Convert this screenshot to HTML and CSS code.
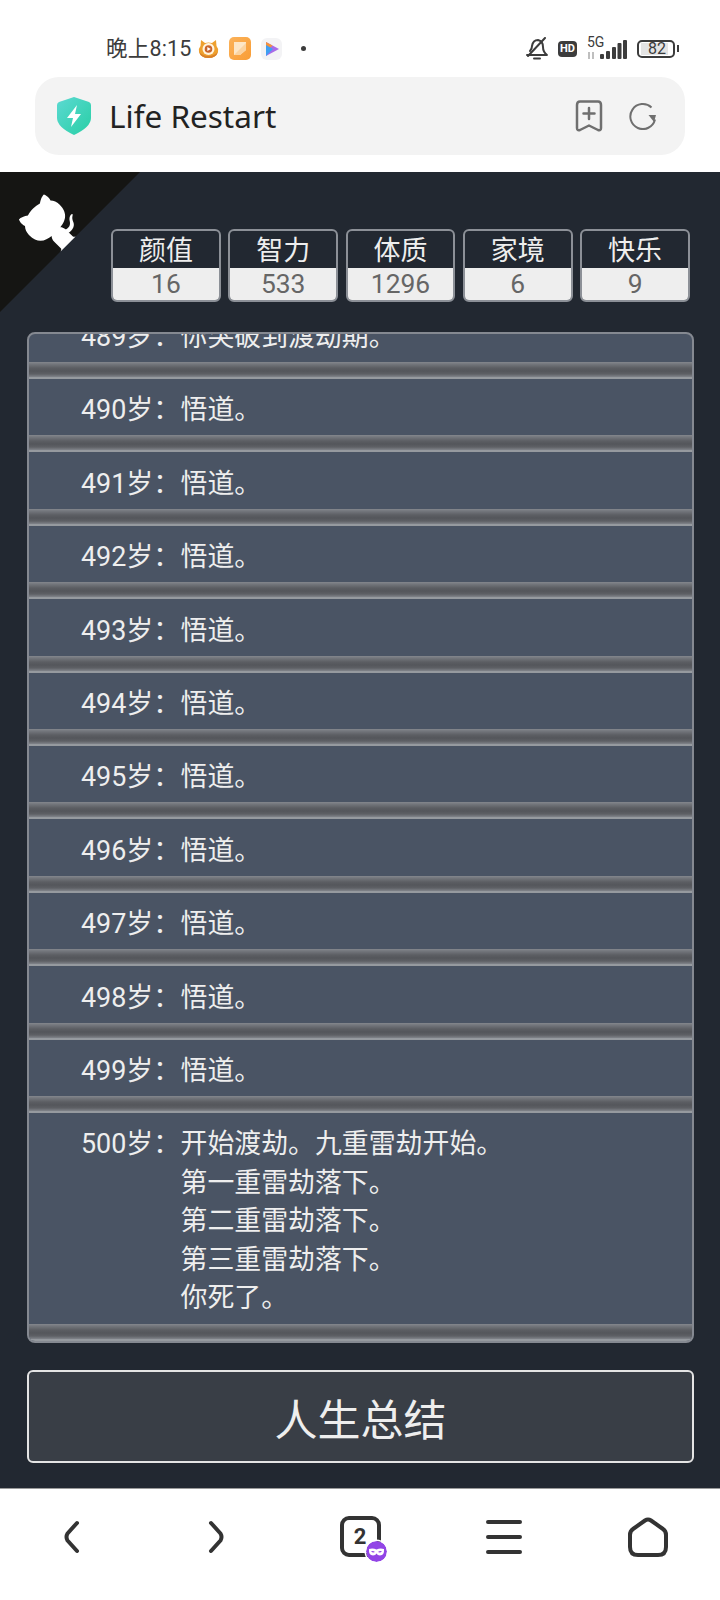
FILE: index.html
```html
<!DOCTYPE html>
<html lang="zh-CN">
<head>
    <meta charset="UTF-8">
    <meta name="viewport" content="width=device-width, initial-scale=1.0">
    <title>Life Restart</title>
    <link rel="stylesheet" href="styles.css">
</head>
<body>
    <div class="page">
        <header class="browser-top">
            <div class="statusbar">
                <div class="status-left">
                    <span class="clock">晚上8:15</span>
                    <svg class="notif" width="21" height="20" viewBox="0 0 21 20">
                        <path d="M3 1 L7 4 Q10.500 3 14 4 L18 1 L18.500 7 Q21 10 20 13 Q18 19 10.500 19 Q3 19 1 13 Q0 10 2.500 7 Z" fill="#eea02e"/>
                        <path d="M1 13 Q5 17 10.500 17 Q16 17 20 13 Q18 19 10.500 19 Q3 19 1 13 Z" fill="#d9802a"/>
                        <circle cx="10.500" cy="10" r="6" fill="#fff4df"/>
                        <circle cx="10.500" cy="10" r="3.800" fill="#c8642b"/>
                        <path d="M9.300 8 L12.800 10 L9.300 12 Z" fill="#fff"/>
                    </svg>
                    <svg class="notif" width="22" height="23" viewBox="0 0 22 23">
                        <defs>
                            <linearGradient id="noteFill" x1="0" y1="0" x2="1" y2="1">
                                <stop offset="0" stop-color="#fbb25a"/>
                                <stop offset="1" stop-color="#f99d35"/>
                            </linearGradient>
                        </defs>
                        <rect width="22" height="23" rx="5" fill="url(#noteFill)"/>
                        <path d="M5 5 H17 V13 L11 18 H5 Z" fill="#fde6c6"/>
                        <path d="M5 18 L17 6 V13 L11 18 Z" fill="#fbd3a0"/>
                    </svg>
                    <svg class="notif" width="21" height="22" viewBox="0 0 21 22">
                        <rect width="21" height="22" rx="6" fill="#f3f3f5"/>
                        <path d="M5 4 L18 11 L5 18 Z" fill="#a86be8"/>
                        <path d="M5 4 L11.500 7.500 L8 11 L5 11 Z" fill="#f5923c"/>
                        <path d="M5 7 L12 11 L5 18 Z" fill="#3f9ff2"/>
                    </svg>
                    <span class="status-dot"></span>
                </div>
                <div class="status-right">
                    <svg width="24" height="24" viewBox="0 0 24 24" fill="none" stroke="#3c3c3c" stroke-width="2" stroke-linecap="round" stroke-linejoin="round">
                        <path d="M5 14 Q7 12 7 9 Q8 3 13 3 Q18 4 18 10 Q18 15 22 18 H2"/>
                        <path d="M9 21.500 H15"/>
                        <path d="M3 19 L20 1"/>
                    </svg>
                    <span class="hd">HD</span>
                    <div class="signal">
                        <span class="five-g">5G</span>
                        <svg width="40" height="20" viewBox="0 0 40 20">
                            <path d="M2 13 V20 M6 13 V20" stroke="#aaa" stroke-width="1.500" fill="none"/>
                            <rect x="13" y="15" width="4" height="5" rx="1" fill="#3c3c3c"/>
                            <rect x="19" y="12" width="4" height="8" rx="1" fill="#3c3c3c"/>
                            <rect x="25" y="8" width="4" height="12" rx="1" fill="#3c3c3c"/>
                            <rect x="30.500" y="4" width="4" height="16" rx="1" fill="#3c3c3c"/>
                            <rect x="36" y="1" width="4" height="19" rx="1" fill="#3c3c3c"/>
                        </svg>
                    </div>
                    <div class="battery">
                        <div class="battery-body"><span class="battery-level">82</span></div>
                        <span class="battery-cap"></span>
                    </div>
                </div>
            </div>
            <div class="urlbar">
                <svg class="shield" width="34" height="38" viewBox="0 0 34 38">
                    <defs>
                        <linearGradient id="shieldFill" x1="0" y1="0" x2="1" y2="1">
                            <stop offset="0" stop-color="#5cd9d2"/>
                            <stop offset="1" stop-color="#28cfa5"/>
                        </linearGradient>
                    </defs>
                    <path d="M17 0 L32 5 Q34 6 34 8 V21 Q34 30 17 38 Q0 30 0 21 V8 Q0 6 2 5 Z" fill="url(#shieldFill)"/>
                    <path d="M20 8 L10 21 H16 L14 30 L24 17 H18 Z" fill="#fff"/>
                </svg>
                <span class="site-title">Life Restart</span>
                <svg class="bookmark" width="28" height="32" viewBox="0 0 28 32" fill="none" stroke="#6f6f6f" stroke-width="2.500" stroke-linejoin="round" stroke-linecap="round">
                    <path d="M2 5 Q2 1.500 5 1.500 H23 Q26 1.500 26 5 V28 Q26 31 23 30 L14 25.500 L5 30 Q2 31 2 28 Z"/>
                    <path d="M14 8 V19 M8.500 13.500 H19.500"/>
                </svg>
                <svg class="reload" width="28" height="28" viewBox="0 0 28 28" fill="none">
                    <path d="M22.500 5.500 A12.500 12.500 0 1 0 26 17.500" stroke="#6f6f6f" stroke-width="2"/>
                    <path d="M19.500 13 H27 L25 20 Z" fill="#6f6f6f"/>
                </svg>
            </div>
        </header>

        <main class="game">
            <svg class="octocat" width="140" height="140" viewBox="0 0 250 250">
                <g transform="translate(250 0) scale(-1 1)">
                    <path d="M0,0 L115,115 L130,115 L142,142 L250,250 L250,0 Z" fill="#151513"/>
                    <path d="M128.3,109.0 C113.8,99.7 119.0,89.6 119.0,89.6 C122.0,82.7 120.5,78.6 120.5,78.6 C119.2,72.0 123.4,76.3 123.4,76.3 C127.3,80.9 125.5,87.3 125.5,87.3 C122.9,97.6 130.6,101.9 134.4,103.2" fill="#fff"/>
                    <path d="M115.0,115.0 C114.9,115.1 118.7,116.5 119.8,115.4 L133.7,101.6 C136.9,99.2 139.9,98.4 142.2,98.6 C133.8,88.0 127.5,74.4 143.8,58.0 C148.5,53.4 154.0,51.2 159.7,51.0 C160.3,49.4 163.2,43.6 171.4,40.1 C171.4,40.1 176.1,42.5 178.8,56.2 C183.1,58.6 187.2,61.8 190.9,65.4 C194.5,69.0 197.7,73.2 200.1,77.6 C213.8,80.2 216.3,84.9 216.3,84.9 C212.7,93.1 206.9,96.0 205.4,96.6 C205.1,102.4 203.0,107.8 198.3,112.5 C181.9,128.9 168.3,122.5 157.7,114.1 C157.9,116.9 156.7,120.9 152.7,124.9 L141.0,136.5 C139.8,137.7 141.6,141.9 141.8,141.8 Z" fill="#fff"/>
                </g>
            </svg>

            <div class="stats">
                <div class="stat"><div class="stat-name">颜值</div><div class="stat-value">16</div></div>
                <div class="stat"><div class="stat-name">智力</div><div class="stat-value">533</div></div>
                <div class="stat"><div class="stat-name">体质</div><div class="stat-value">1296</div></div>
                <div class="stat"><div class="stat-name">家境</div><div class="stat-value">6</div></div>
                <div class="stat"><div class="stat-name">快乐</div><div class="stat-value">9</div></div>
            </div>

            <div class="trajectory">
                <ul class="trajectory-list">
                    <li class="year"><span class="age">489岁：</span><span class="event">你突破到渡劫期。</span></li>
                    <li class="year"><span class="age">490岁：</span><span class="event">悟道。</span></li>
                    <li class="year"><span class="age">491岁：</span><span class="event">悟道。</span></li>
                    <li class="year"><span class="age">492岁：</span><span class="event">悟道。</span></li>
                    <li class="year"><span class="age">493岁：</span><span class="event">悟道。</span></li>
                    <li class="year"><span class="age">494岁：</span><span class="event">悟道。</span></li>
                    <li class="year"><span class="age">495岁：</span><span class="event">悟道。</span></li>
                    <li class="year"><span class="age">496岁：</span><span class="event">悟道。</span></li>
                    <li class="year"><span class="age">497岁：</span><span class="event">悟道。</span></li>
                    <li class="year"><span class="age">498岁：</span><span class="event">悟道。</span></li>
                    <li class="year"><span class="age">499岁：</span><span class="event">悟道。</span></li>
                    <li class="year"><span class="age">500岁：</span><span class="event">开始渡劫。九重雷劫开始。<br>第一重雷劫落下。<br>第二重雷劫落下。<br>第三重雷劫落下。<br>你死了。</span></li>
                </ul>
            </div>

            <button class="summary" type="button">人生总结</button>
        </main>

        <nav class="browser-nav">
            <svg width="20" height="34" viewBox="0 0 20 34" fill="none" stroke="#333" stroke-width="4" stroke-linecap="round" stroke-linejoin="round">
                <path d="M15 3 L5.500 13.500 Q3.500 17 5.500 20.500 L15 31"/>
            </svg>
            <svg width="20" height="34" viewBox="0 0 20 34" fill="none" stroke="#333" stroke-width="4" stroke-linecap="round" stroke-linejoin="round">
                <path d="M5 3 L14.500 13.500 Q16.500 17 14.500 20.500 L5 31"/>
            </svg>
            <div class="tabs">
                <span class="tab-count">2</span>
                <svg class="incognito" width="21" height="21" viewBox="0 0 21 21">
                    <circle cx="10.500" cy="10.500" r="10.500" fill="#9245e6"/>
                    <path d="M3 8 Q7 7 10.500 8.500 Q14 7 18 8 Q18.500 14.500 14 14.500 Q11.500 14.500 10.500 12.500 Q9.500 14.500 7 14.500 Q2.500 14.500 3 8 Z" fill="#fff"/>
                    <path d="M5 10.500 Q7 9.500 9 11 Q7 12 5 10.500 Z M16 10.500 Q14 9.500 12 11 Q14 12 16 10.500 Z" fill="#9245e6"/>
                </svg>
            </div>
            <svg width="36" height="34" viewBox="0 0 36 34" fill="none" stroke="#333" stroke-width="4" stroke-linecap="round">
                <path d="M2 2 H34 M2 17 H34 M2 32 H34"/>
            </svg>
            <svg width="40" height="40" viewBox="0 0 40 40" fill="none" stroke="#333" stroke-width="4" stroke-linejoin="round">
                <path d="M17 3.500 Q20 1.500 23 3.500 L35 12 Q38 14 38 18 V30 Q38 38 30 38 H10 Q2 38 2 30 V18 Q2 14 5 12 Z"/>
            </svg>
        </nav>
    </div>
</body>
</html>
```

FILE: styles.css
```css
* {
    box-sizing: border-box;
}
body {
    margin: 0;
    font-family: Roboto, "Noto Sans CJK SC", sans-serif;
}
.page {
    display: flex;
    flex-direction: column;
    width: 720px;
    height: 1600px;
    overflow: hidden;
}

/* browser chrome, top */
.browser-top {
    height: 172px;
    flex: none;
    background-color: #fff;
}
.statusbar {
    display: flex;
    justify-content: space-between;
    align-items: center;
    height: 77px;
    padding: 20px 41px 0 106px;
}
.status-left, .status-right {
    display: flex;
    align-items: center;
}
.clock {
    margin-right: 6px;
    margin-bottom: 4px;
    color: #3c3c3c;
    font-size: 21.500px;
    letter-spacing: 0.200px;
}
.notif {
    margin-right: 10px;
}
.status-dot {
    width: 5px;
    height: 5px;
    margin-left: 9px;
    border-radius: 50%;
    background-color: #3c3c3c;
}
.status-right svg {
    display: block;
}
.hd {
    width: 19px;
    height: 16px;
    margin-left: 9px;
    border-radius: 4px;
    background-color: #3c3c3c;
    color: #fff;
    font-size: 11px;
    font-weight: 700;
    line-height: 16px;
    text-align: center;
}
.signal {
    position: relative;
    width: 40px;
    height: 20px;
    margin-left: 10px;
}
.five-g {
    position: absolute;
    top: -4px;
    left: 0;
    color: #3c3c3c;
    font-size: 14px;
    line-height: 14px;
}
.battery {
    display: flex;
    align-items: center;
    margin-left: 10px;
}
.battery-body {
    width: 38px;
    height: 18px;
    padding: 1px 0 1px 2px;
    border: 2px solid #3c3c3c;
    border-radius: 5px;
}
.battery-level {
    display: block;
    height: 12px;
    background-image: linear-gradient(90deg, #e4e4e4 84%, transparent 84%);
    color: #3c3c3c;
    font-size: 16px;
    line-height: 12px;
    text-align: center;
}
.battery-cap {
    width: 2px;
    height: 7px;
    margin-left: 2px;
    background-color: #3c3c3c;
}
.urlbar {
    display: flex;
    align-items: center;
    width: 650px;
    height: 78px;
    margin-left: 35px;
    padding-left: 22px;
    border-radius: 24px;
    background-color: #f3f3f3;
}
.site-title {
    flex: 1;
    margin-left: 18px;
    margin-bottom: 2px;
    color: #222;
    font-family: "Noto Sans", sans-serif;
    font-size: 31.500px;
}
.reload {
    margin: 0 28px 0 26px;
}

/* game */
.game {
    position: relative;
    flex: 1;
    padding: 57px 26px 0 27px;
    background-color: #222831;
}
.octocat {
    position: absolute;
    top: 0;
    left: 0;
}
.stats {
    display: flex;
    gap: 7.500px;
    padding: 0 4px 0 84px;
}
.stat {
    width: 110px;
    height: 73px;
    overflow: hidden;
    border: 2px solid #8c9097;
    border-radius: 6px;
    text-align: center;
}
.stat-name {
    height: 37px;
    padding-top: 3px;
    color: #eee;
    font-size: 27px;
    line-height: 34px;
}
.stat-value {
    height: 32px;
    padding-top: 1px;
    background-color: #eee;
    color: #666;
    font-size: 26.400px;
    line-height: 31px;
}
.trajectory {
    height: 1011px;
    margin-top: 30px;
    overflow: hidden;
    border: 2px solid #858991;
    border-radius: 8px;
    background-color: #4a5464;
}
.trajectory-list {
    margin: -28.500px 0 0;
    padding: 0;
    list-style: none;
}
.year {
    display: flex;
    padding: 12.500px 0 22.500px 52px;
    color: #eee;
    font-size: 26.900px;
    line-height: 38.400px;
    background-image: linear-gradient(#84878d 0, #74777d 2px, #5c5e63 6px, #54565b 9px, #5e6065 12px, #7b7e84 14.500px, #969a9f 15px, #969a9f 17px);
    background-repeat: no-repeat;
    background-position: bottom;
    background-size: 100% 17px;
}
.year:last-child {
    padding-bottom: 23.500px;
}
.age {
    width: 99.500px;
    flex: none;
    white-space: nowrap;
}
.summary {
    display: block;
    width: 667px;
    height: 93px;
    margin-top: 27px;
    padding: 0;
    border: 2px solid #e4e4e4;
    border-radius: 6px;
    background-color: #393e46;
    color: #eee;
    font-family: inherit;
    font-size: 43px;
}

/* browser chrome, bottom */
.browser-nav {
    display: grid;
    grid-template-columns: repeat(5, 144px);
    justify-items: center;
    align-items: center;
    height: 112px;
    flex: none;
    padding-bottom: 16px;
    border-top: 1px solid #9a9a9a;
    background-color: #fff;
}
.tabs {
    position: relative;
    width: 41px;
    height: 41px;
    border: 4px solid #333;
    border-radius: 9px;
    text-align: center;
}
.tab-count {
    color: #333;
    font-size: 22px;
    font-weight: 700;
    line-height: 33px;
}
.incognito {
    position: absolute;
    right: -10px;
    bottom: -9px;
    border-radius: 50%;
    box-shadow: 0 0 0 1.500px #fff;
}
```
